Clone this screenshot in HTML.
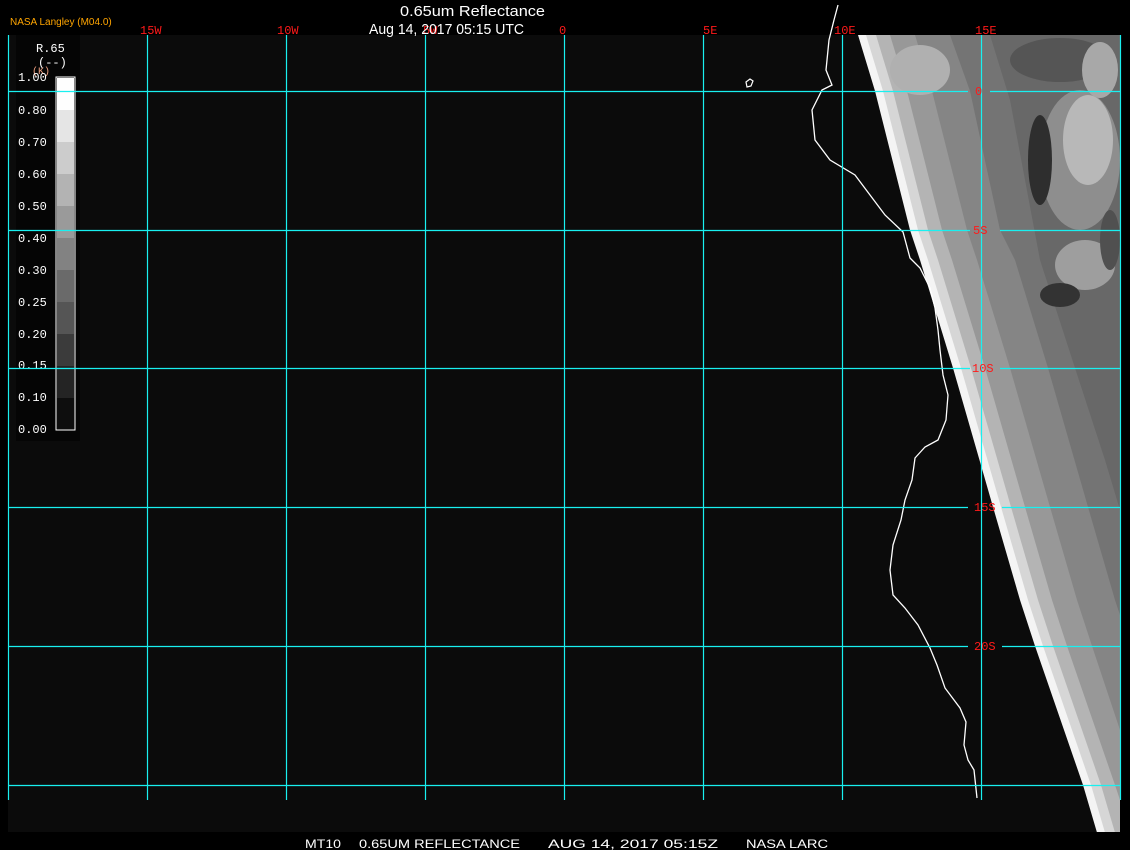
<!DOCTYPE html>
<html><head><meta charset="utf-8"><style>
html,body{margin:0;padding:0;background:#000;width:1130px;height:850px;overflow:hidden}
svg{display:block}
</style></head><body>
<svg width="1130" height="850" xmlns="http://www.w3.org/2000/svg">
<rect width="1130" height="850" fill="#000"/>
<rect x="8" y="35" width="1112" height="797" fill="#0b0b0b"/>
<polygon points="858,35 875,91 910,230 920,260 953,368 993,507 1020,600 1035,646 1083,785 1098,836 1120,836 1120,35" fill="#f4f4f4"/>
<polygon points="866,35 883,91 918,230 928,260 961,368 1001,507 1028,600 1043,646 1091,785 1106,836 1120,836 1120,35" fill="#d6d6d6"/>
<polygon points="876,35 893,91 928,230 938,260 971,368 1011,507 1038,600 1053,646 1101,785 1116,836 1120,836 1120,35" fill="#b4b4b4"/>
<polygon points="890,35 907,91 942,230 952,260 985,368 1025,507 1052,600 1067,646 1115,785 1120,800 1120,35" fill="#989898"/>
<polygon points="915,35 932,91 967,230 977,260 1010,368 1050,507 1077,600 1092,646 1120,730 1120,35" fill="#858585"/>
<polygon points="950,35 970,91 1000,230 1015,260 1048,368 1088,507 1115,600 1120,615 1120,35" fill="#747474"/>
<polygon points="990,35 1010,100 1040,260 1075,368 1105,460 1120,510 1120,35" fill="#686868"/>
<ellipse cx="1080" cy="160" rx="40" ry="70" fill="#8e8e8e"/>
<ellipse cx="1088" cy="140" rx="25" ry="45" fill="#b8b8b8"/>
<ellipse cx="1040" cy="160" rx="12" ry="45" fill="#2e2e2e"/>
<ellipse cx="1060" cy="60" rx="50" ry="22" fill="#555"/>
<ellipse cx="1100" cy="70" rx="18" ry="28" fill="#a8a8a8"/>
<ellipse cx="1085" cy="265" rx="30" ry="25" fill="#9e9e9e"/>
<ellipse cx="1060" cy="295" rx="20" ry="12" fill="#333"/>
<ellipse cx="1110" cy="240" rx="10" ry="30" fill="#505050"/>
<ellipse cx="920" cy="70" rx="30" ry="25" fill="#b0b0b0"/>
<polyline fill="none" stroke="#fff" stroke-width="1.3" points="838,5 834,20 829,40 826,70 832,85 822,90 812,110 815,140 830,160 855,175 870,195 885,215 903,232 910,258 920,268 930,288 935,308 938,330 940,350 943,375 948,395 946,420 938,440 925,447 915,458 912,480 905,500 901,520 893,545 890,570 893,595 905,608 918,625 930,648 937,665 945,688 960,708 966,722 964,745 968,760 974,770 977,798"/>
<path d="M746,82 l4,-3 l3,2 l-2,5 l-4,1 z" fill="none" stroke="#fff" stroke-width="1.2"/>
<rect x="16" y="35" width="64" height="406" fill="#050505"/>
<rect x="56" y="77" width="19" height="353" fill="#0e0e0e" stroke="#fff" stroke-width="1"/>
<g>
<rect x="57" y="78" width="17" height="32" fill="#fefefe"/>
<rect x="57" y="110" width="17" height="32" fill="#e5e5e5"/>
<rect x="57" y="142" width="17" height="32" fill="#cccccc"/>
<rect x="57" y="174" width="17" height="32" fill="#b3b3b3"/>
<rect x="57" y="206" width="17" height="32" fill="#9a9a9a"/>
<rect x="57" y="238" width="17" height="32" fill="#828282"/>
<rect x="57" y="270" width="17" height="32" fill="#6a6a6a"/>
<rect x="57" y="302" width="17" height="32" fill="#555555"/>
<rect x="57" y="334" width="17" height="32" fill="#3b3b3b"/>
<rect x="57" y="366" width="17" height="32" fill="#242424"/>
</g>
<g font-family="Liberation Mono, monospace" font-size="12" fill="#fff">
<text x="36" y="52">R.65</text>
<text x="38" y="66">(--)</text>
<text x="32" y="74" fill="#f0a080" font-size="10">(K)</text>
<text x="18" y="81">1.00</text><text x="18" y="114">0.80</text><text x="18" y="146">0.70</text>
<text x="18" y="178">0.60</text><text x="18" y="210">0.50</text><text x="18" y="242">0.40</text>
<text x="18" y="274">0.30</text><text x="18" y="306">0.25</text><text x="18" y="338">0.20</text>
<text x="18" y="369">0.15</text><text x="18" y="401">0.10</text><text x="18" y="433">0.00</text>
</g>
<g stroke="#19f0f0" stroke-width="1.2">
<line x1="8.5" y1="35" x2="8.5" y2="800"/>
<line x1="147.5" y1="35" x2="147.5" y2="800"/>
<line x1="286.5" y1="35" x2="286.5" y2="800"/>
<line x1="425.5" y1="35" x2="425.5" y2="800"/>
<line x1="564.5" y1="35" x2="564.5" y2="800"/>
<line x1="703.5" y1="35" x2="703.5" y2="800"/>
<line x1="842.5" y1="35" x2="842.5" y2="800"/>
<line x1="981.5" y1="35" x2="981.5" y2="800"/>
<line x1="1120.5" y1="35" x2="1120.5" y2="800"/>
<line x1="8" y1="91.5" x2="968" y2="91.5"/><line x1="990" y1="91.5" x2="1120" y2="91.5"/>
<line x1="8" y1="230.5" x2="970" y2="230.5"/><line x1="1000" y1="230.5" x2="1120" y2="230.5"/>
<line x1="8" y1="368.5" x2="970" y2="368.5"/><line x1="1000" y1="368.5" x2="1120" y2="368.5"/>
<line x1="8" y1="507.5" x2="968" y2="507.5"/><line x1="1002" y1="507.5" x2="1120" y2="507.5"/>
<line x1="8" y1="646.5" x2="968" y2="646.5"/><line x1="1002" y1="646.5" x2="1120" y2="646.5"/>
<line x1="8" y1="785.5" x2="1120" y2="785.5"/>
</g>
<g font-family="Liberation Mono, monospace" font-size="12" fill="#ff1a1a">
<text x="140" y="34">15W</text><text x="277" y="34">10W</text><text x="423" y="34">5W</text>
<text x="559" y="34">0</text><text x="703" y="34">5E</text><text x="834" y="34">10E</text><text x="975" y="34">15E</text>
<text x="975" y="95">0</text><text x="973" y="234">5S</text><text x="972" y="372">10S</text>
<text x="974" y="511">15S</text><text x="974" y="650">20S</text>
</g>
<text x="10" y="25" font-family="Liberation Sans, sans-serif" font-size="10" fill="#ffa500">NASA Langley (M04.0)</text>
<g font-family="Liberation Sans, sans-serif" font-size="15" fill="#fff">
<text x="400" y="16" textLength="145" lengthAdjust="spacingAndGlyphs">0.65um Reflectance</text>
<text x="369" y="34" textLength="155" lengthAdjust="spacingAndGlyphs">Aug 14, 2017 05:15 UTC</text>
</g>
<rect x="0" y="832" width="1130" height="18" fill="#000"/>
<g font-family="Liberation Sans, sans-serif" font-size="12" fill="#fff">
<text x="305" y="848" textLength="36" lengthAdjust="spacingAndGlyphs">MT10</text>
<text x="359" y="848" textLength="161" lengthAdjust="spacingAndGlyphs">0.65UM REFLECTANCE</text>
<text x="548" y="848" textLength="170" lengthAdjust="spacingAndGlyphs">AUG 14, 2017 05:15Z</text>
<text x="746" y="848" textLength="82" lengthAdjust="spacingAndGlyphs">NASA LARC</text>
</g>
</svg>
</body></html>
